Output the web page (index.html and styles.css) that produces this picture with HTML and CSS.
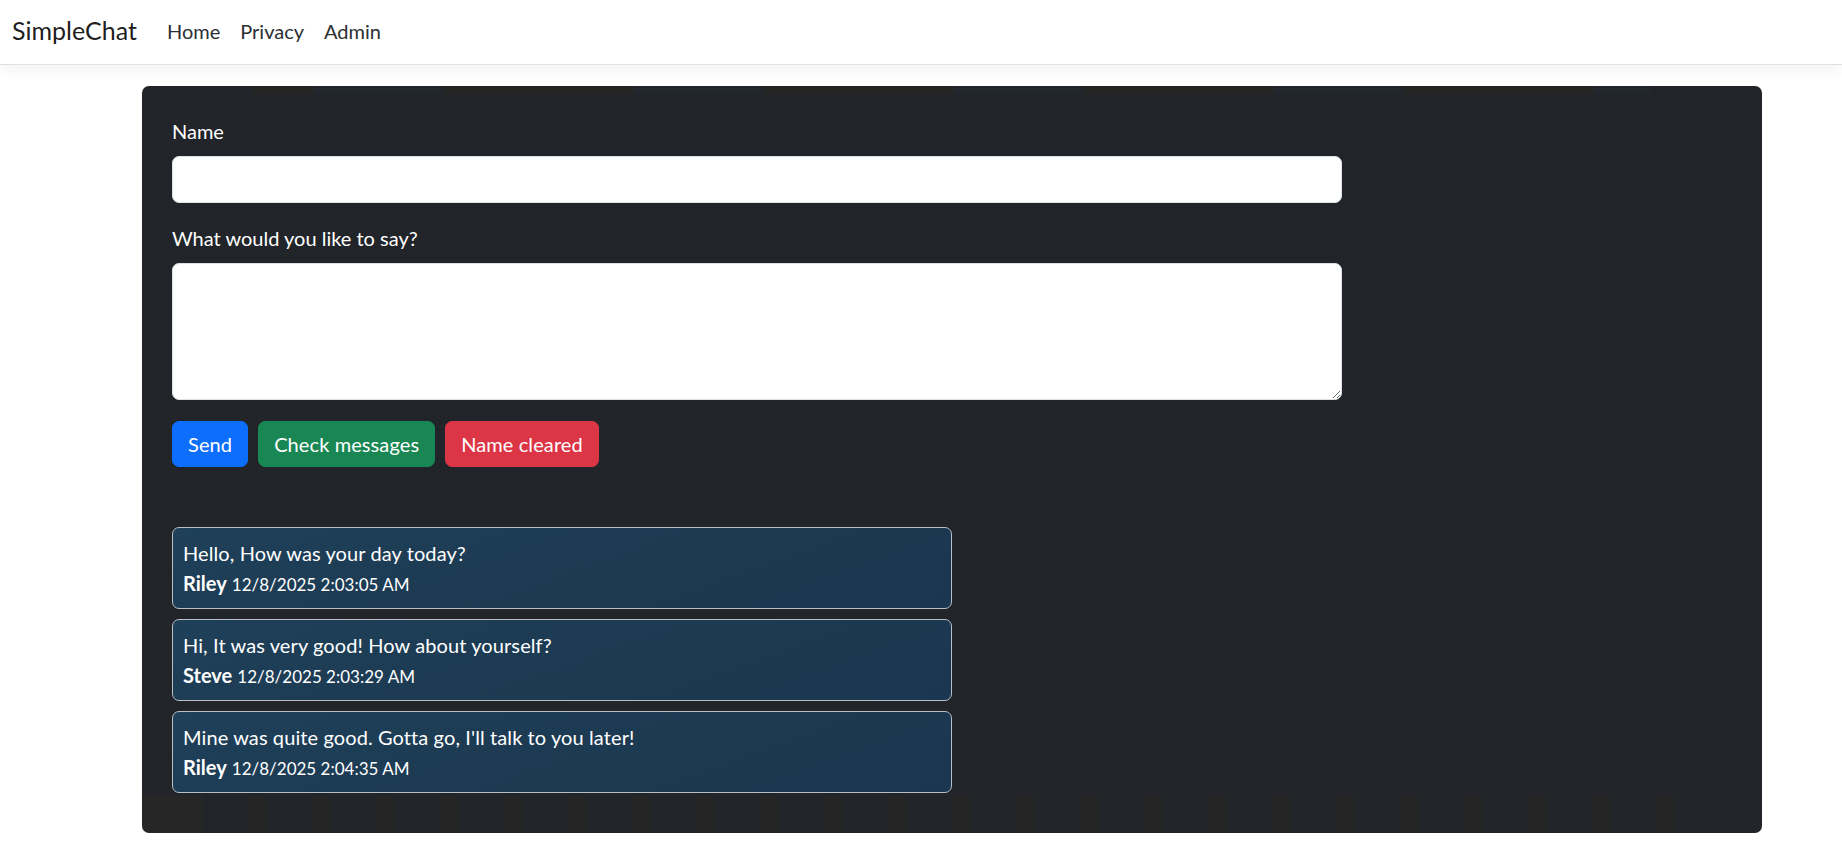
FILE: index.html
```html
<!DOCTYPE html>
<html lang="en">
<head>
<meta charset="utf-8">
<title>SimpleChat</title>
<link rel="stylesheet" href="styles.css">
</head>
<body>
  <header class="navbar">
    <a class="brand" href="#">SimpleChat</a>
    <nav class="nav">
      <a class="nav-link" href="#">Home</a>
      <a class="nav-link" href="#">Privacy</a>
      <a class="nav-link" href="#">Admin</a>
    </nav>
  </header>

  <main class="panel">
    <form class="chat-form">
      <div class="field">
        <label class="label" for="name">Name</label>
        <input class="control" id="name" type="text">
      </div>
      <div class="field">
        <label class="label" for="message">What would you like to say?</label>
        <textarea class="control area" id="message"></textarea>
      </div>
      <div class="actions">
        <button type="button" class="btn btn-blue">Send</button>
        <button type="button" class="btn btn-green">Check messages</button>
        <button type="button" class="btn btn-red">Name cleared</button>
      </div>
    </form>

    <section class="messages">
      <div class="message">
        <div class="message-text">Hello, How was your day today?</div>
        <div class="message-meta"><strong class="author">Riley</strong> <span class="stamp">12/8/2025 2:03:05 AM</span></div>
      </div>
      <div class="message">
        <div class="message-text">Hi, It was very good! How about yourself?</div>
        <div class="message-meta"><strong class="author">Steve</strong> <span class="stamp">12/8/2025 2:03:29 AM</span></div>
      </div>
      <div class="message">
        <div class="message-text">Mine was quite good. Gotta go, I'll talk to you later!</div>
        <div class="message-meta"><strong class="author">Riley</strong> <span class="stamp">12/8/2025 2:04:35 AM</span></div>
      </div>
    </section>
  </main>
</body>
</html>
```

FILE: styles.css
```css
* {
  box-sizing: border-box;
}

html, body {
  margin: 0;
  padding: 0;
  background: #ffffff;
}

body {
  font-family: Lato, "Noto Sans", "Liberation Sans", sans-serif;
  font-size: 20px;
  line-height: 1.5;
  color: #212529;
}

/* top navigation bar */
.navbar {
  height: 65px;
  display: flex;
  align-items: center;
  padding: 0 12px 2px;
  background: #ffffff;
  border-bottom: 1px solid #dee2e6;
  box-shadow: 0 5px 15px rgba(0, 0, 0, 0.05);
}

.brand {
  font-size: 25px;
  color: rgba(0, 0, 0, 0.9);
  text-decoration: none;
  margin-right: 20px;
  line-height: 1.5;
}

.nav {
  display: flex;
}

.nav-link {
  padding: 10px 10px;
  color: #2b2f33;
  text-decoration: none;
}

/* dark chat panel */
.panel {
  width: 1620px;
  margin: 21px 0 0 142px;
  padding: 30px;
  border-radius: 7px;
  background:
    linear-gradient(#262626, #262626) left bottom / 61px 38px no-repeat,
    repeating-linear-gradient(90deg, #212529 0 44px, #252525 44px 64px) left 61px bottom / 1475px 38px no-repeat,
    repeating-linear-gradient(90deg, #252525 0 62px, #22272e 62px 190px, #252525 190px 320px) left 110px top / 1400px 8px no-repeat,
    #212529;
}

.chat-form {
  width: 75%;
}

.field {
  margin-bottom: 20px;
}

.label {
  display: block;
  color: #ffffff;
  margin-bottom: 10px;
}

.control {
  display: block;
  width: 100%;
  height: 47px;
  padding: 7px 15px;
  font: inherit;
  color: #212529;
  background: #ffffff;
  border: 1px solid #dee2e6;
  border-radius: 7px;
  outline: none;
}

.area {
  height: 137px;
  resize: vertical;
}

.actions {
  display: flex;
  gap: 10px;
  margin-top: 21px;
}

.btn {
  height: 46px;
  padding: 7px 15px;
  font: inherit;
  letter-spacing: 0.1px;
  color: #ffffff;
  border: 1px solid transparent;
  border-radius: 7px;
  cursor: pointer;
}

.btn-blue {
  background: #0d6efd;
  border-color: #0d6efd;
}

.btn-green {
  background: #198754;
  border-color: #198754;
}

.btn-red {
  background: #dc3545;
  border-color: #dc3545;
}

/* posted messages */
.messages {
  width: 50%;
  margin-top: 60px;
}

.message {
  padding: 10px;
  margin-bottom: 10px;
  color: #ffffff;
  border: 1px solid #b8bfc6;
  border-radius: 7px;
  background: linear-gradient(160deg, #1f4059 0%, #1c3a52 55%, #1b3650 100%);
}

.message-text {
  height: 30px;
  line-height: 30px;
  letter-spacing: 0.1px;
}

.message-meta {
  height: 30px;
  line-height: 30px;
}

.author {
  font-weight: 700;
}

.stamp {
  font-size: 17px;
  line-height: 1;
}
```
